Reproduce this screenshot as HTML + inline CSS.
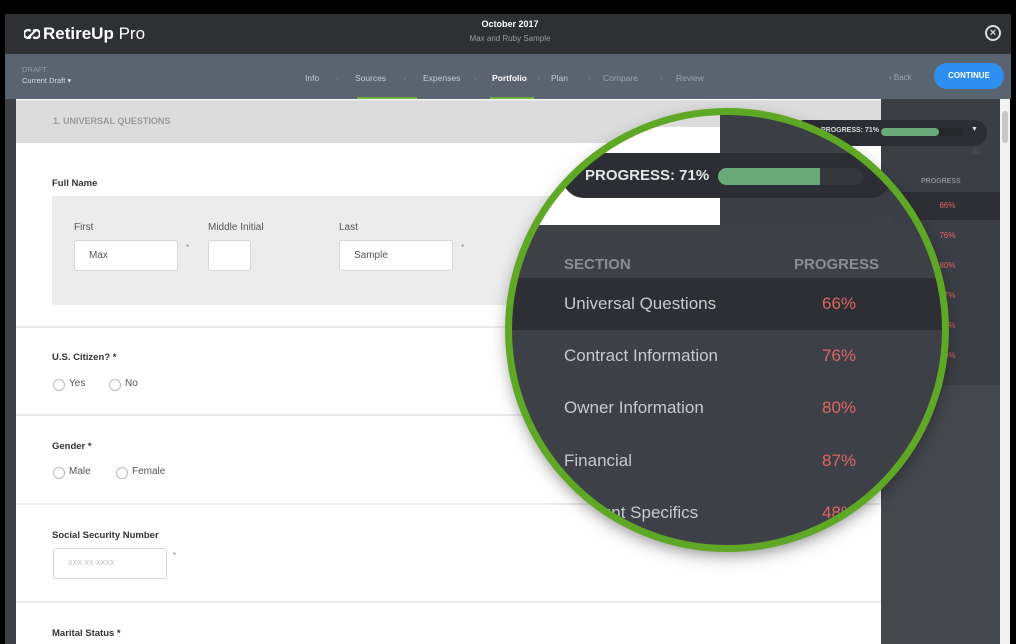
<!DOCTYPE html>
<html><head><meta charset="utf-8"><style>
*{margin:0;padding:0;box-sizing:border-box}
body{width:1016px;height:644px;background:#000;position:relative;overflow:hidden;font-family:"Liberation Sans",sans-serif}
.a{position:absolute}
.hdr{left:5px;top:14px;width:1006px;height:40px;background:#2e3034}
.nav{left:5px;top:54px;width:1006px;height:45px;background:#5a6470}
.nav .t{position:absolute;top:19px;font-size:8.5px;color:#c8cfd6;white-space:nowrap}
.nav .c{position:absolute;top:19px;font-size:8.5px;color:#7e8894}
.side{left:5px;top:99px;width:11px;height:545px;background:#3e4146}
.main{left:16px;top:99px;width:865px;height:545px;background:#fff;overflow:hidden}
.lbl{font-size:9.5px;font-weight:bold;color:#333}
.inp{background:#fff;border:1px solid #d6d6d6;border-radius:3px;height:31px;font-size:10px;color:#555;padding:9px 0 0 14px}
.rad{width:12px;height:12px;border:1px solid #bbb;border-radius:50%}
.rt{font-size:10px;color:#555}
.hr{height:2px;background:#eaeaea;width:865px;left:0}
.panel{left:881px;top:99px;width:119px;height:545px;background:#45474f}
.sb{left:1000px;top:99px;width:10px;height:545px;background:#f2f2f2}
.circ{left:510px;top:113px;width:434px;height:434px;border-radius:50%;overflow:hidden;background:#3d4047;box-shadow:0 6px 18px rgba(0,0,0,.55)}
.ring{left:505px;top:108px;width:444px;height:444px;border-radius:50%;border:7px solid #5fa825}
.row{position:absolute;left:0;width:434px;height:52px;font-size:17px;color:#c9cacd}
.row span{position:absolute;top:16px}
.row .p{left:312px;color:#e06565}
.row .n{left:54px}
.srow{position:absolute;left:0;width:119px;height:28px;font-size:8px;color:#e06565;text-align:center;padding-left:14px;line-height:28px}
</style></head><body>
<div class="a hdr">
 <svg class="a" style="left:19px;top:13px" width="16" height="14" viewBox="0 0 16 14"><path d="M6 3.5A4 4 0 1 0 6 10.5M10 3.5A4 4 0 1 1 10 10.5M5 10L11 4" fill="none" stroke="#fff" stroke-width="2.2" stroke-linecap="round"/></svg>
 <div class="a" style="left:38px;top:10px;font-size:17px;color:#fff"><b>RetireUp</b> Pro</div>
 <div class="a" style="left:430px;top:5px;width:150px;text-align:center;font-size:9px;font-weight:bold;color:#fff">October 2017</div>
 <div class="a" style="left:430px;top:20px;width:150px;text-align:center;font-size:8px;color:#9a9ca0">Max and Ruby Sample</div>
 <div class="a" style="left:980px;top:11px;width:16px;height:16px;border:2px solid #ddd;border-radius:50%;color:#ddd;font-size:11px;font-weight:bold;text-align:center;line-height:12px">×</div>
</div>
<div class="a nav">
 <div class="a" style="left:17px;top:11px;font-size:7.5px;color:#8e97a2">DRAFT</div>
 <div class="a" style="left:17px;top:22px;font-size:7.5px;color:#d8dde2">Current Draft ▾</div>
 <div class="t" style="left:300px">Info</div><div class="c" style="left:331px">›</div>
 <div class="t" style="left:350px">Sources</div><div class="c" style="left:398px">›</div>
 <div class="t" style="left:418px">Expenses</div><div class="c" style="left:469px">›</div>
 <div class="t" style="left:487px;color:#fff;font-weight:bold">Portfolio</div><div class="c" style="left:532px">›</div>
 <div class="t" style="left:546px">Plan</div><div class="c" style="left:583px">›</div>
 <div class="t" style="left:598px;color:#9aa3ad">Compare</div><div class="c" style="left:655px">›</div>
 <div class="t" style="left:671px;color:#9aa3ad">Review</div>
 <div class="a" style="left:352px;top:43px;width:60px;height:2px;background:#6cb33f"></div>
 <div class="a" style="left:485px;top:43px;width:44px;height:2px;background:#6cb33f"></div>
 <div class="a" style="left:884px;top:19px;font-size:8px;color:#9aa3ad">‹ Back</div>
 <div class="a" style="left:929px;top:9px;width:70px;height:26px;border-radius:13px;background:#2f8ff0;color:#fff;font-size:8px;font-weight:bold;text-align:center;line-height:26px">CONTINUE</div>
</div>
<div class="a side"></div>
<div class="a main">
 <div class="a" style="left:0;top:1px;width:865px;height:43px;background:#dcdcdc"></div>
 <div class="a" style="left:37px;top:17px;font-size:9px;font-weight:bold;color:#9a9a9a">1. UNIVERSAL QUESTIONS</div>
 <div class="a lbl" style="left:36px;top:79px">Full Name</div>
 <div class="a" style="left:36px;top:97px;width:829px;height:109px;background:#ececec"></div>
 <div class="a rt" style="left:58px;top:123px">First</div>
 <div class="a rt" style="left:192px;top:123px">Middle Initial</div>
 <div class="a rt" style="left:323px;top:123px">Last</div>
 <div class="a inp" style="left:58px;top:141px;width:104px">Max</div>
 <div class="a" style="left:170px;top:144px;font-size:8px;color:#888">*</div>
 <div class="a inp" style="left:192px;top:141px;width:43px"></div>
 <div class="a inp" style="left:323px;top:141px;width:114px">Sample</div>
 <div class="a" style="left:445px;top:144px;font-size:8px;color:#888">*</div>
 <div class="a hr" style="top:227px"></div>
 <div class="a lbl" style="left:36px;top:253px">U.S. Citizen? *</div>
 <div class="a rad" style="left:37px;top:280px"></div><div class="a rt" style="left:53px;top:279px">Yes</div>
 <div class="a rad" style="left:93px;top:280px"></div><div class="a rt" style="left:109px;top:279px">No</div>
 <div class="a hr" style="top:315px"></div>
 <div class="a lbl" style="left:36px;top:342px">Gender *</div>
 <div class="a rad" style="left:37px;top:368px"></div><div class="a rt" style="left:53px;top:367px">Male</div>
 <div class="a rad" style="left:100px;top:368px"></div><div class="a rt" style="left:116px;top:367px">Female</div>
 <div class="a hr" style="top:404px"></div>
 <div class="a lbl" style="left:36px;top:431px">Social Security Number</div>
 <div class="a inp" style="left:37px;top:449px;width:114px;font-size:7px;color:#bbb;padding-top:11px">XXX-XX-XXXX</div>
 <div class="a" style="left:157px;top:452px;font-size:8px;color:#888">*</div>
 <div class="a hr" style="top:502px"></div>
 <div class="a lbl" style="left:36px;top:529px">Marital Status *</div>
</div>
<div class="a panel">
 <div class="a" style="left:0;top:0;width:119px;height:286px;background:#3b3e45"></div>
 <div class="a" style="left:-90px;top:21px;width:196px;height:26px;border-radius:13px;background:#2c2e33"></div>
 <div class="a" style="left:-60px;top:28px;font-size:7px;font-weight:bold;color:#ddd">PROGRESS: 71%</div>
 <div class="a" style="left:0;top:29px;width:82px;height:8px;border-radius:4px;background:#25272b"></div>
 <div class="a" style="left:0;top:29px;width:58px;height:8px;border-radius:4px;background:#6aaa7a"></div>
 <div class="a" style="left:90px;top:27px;font-size:7px;color:#ddd">▼</div>
 <div class="a" style="left:88px;top:48px;width:0;height:0;border-left:7px solid transparent;border-right:7px solid transparent;border-bottom:7px solid #45474f"></div>
 <div class="a" style="left:40px;top:79px;font-size:7px;font-weight:bold;color:#8a8d93">PROGRESS</div>
 <div class="srow" style="top:93px;background:#2d2f34">66%</div>
 <div class="srow" style="top:123px">76%</div>
 <div class="srow" style="top:153px">80%</div>
 <div class="srow" style="top:183px">87%</div>
 <div class="srow" style="top:213px">48%</div>
 <div class="srow" style="top:243px">70%</div>
</div>
<div class="a sb"><div class="a" style="left:2px;top:12px;width:6px;height:32px;border-radius:3px;background:#c8c8c8"></div></div>

<div class="a circ">
 <div class="a" style="left:0;top:0;width:434px;height:112px;background:#fff"></div>
 <div class="a" style="left:0;top:0;width:434px;height:14px;background:#dcdcdc"></div>
 <div class="a" style="left:210px;top:0;width:224px;height:112px;background:#3b3e45"></div>
 <div class="a" style="left:52px;top:40px;width:330px;height:45px;border-radius:22px;background:#2c2e33"></div>
 <div class="a" style="left:75px;top:54px;font-size:15px;font-weight:bold;color:#e4e5e7">PROGRESS: 71%</div>
 <div class="a" style="left:208px;top:55px;width:145px;height:17px;border-radius:9px;background:#35373c"></div>
 <div class="a" style="left:208px;top:55px;width:102px;height:17px;border-radius:9px 0 0 9px;background:#6aaa7a"></div>
 <div class="a" style="left:360px;top:99px;width:0;height:0;border-left:13px solid transparent;border-right:13px solid transparent;border-bottom:13px solid #3d4047"></div>
 <div class="a" style="left:0;top:112px;width:434px;height:322px;background:#3d4047"></div>
 <div class="a" style="left:54px;top:143px;font-size:15px;font-weight:bold;color:#8a8d93">SECTION</div>
 <div class="a" style="left:284px;top:143px;font-size:15px;font-weight:bold;color:#8a8d93">PROGRESS</div>
 <div class="row" style="top:165px;background:#2d2f34"><span class="n">Universal Questions</span><span class="p">66%</span></div>
 <div class="row" style="top:217px"><span class="n">Contract Information</span><span class="p">76%</span></div>
 <div class="row" style="top:269px"><span class="n">Owner Information</span><span class="p">80%</span></div>
 <div class="row" style="top:322px"><span class="n">Financial</span><span class="p">87%</span></div>
 <div class="row" style="top:374px"><span class="n">Account Specifics</span><span class="p">48%</span></div>
</div>
<div class="a ring"></div>
</body></html>
